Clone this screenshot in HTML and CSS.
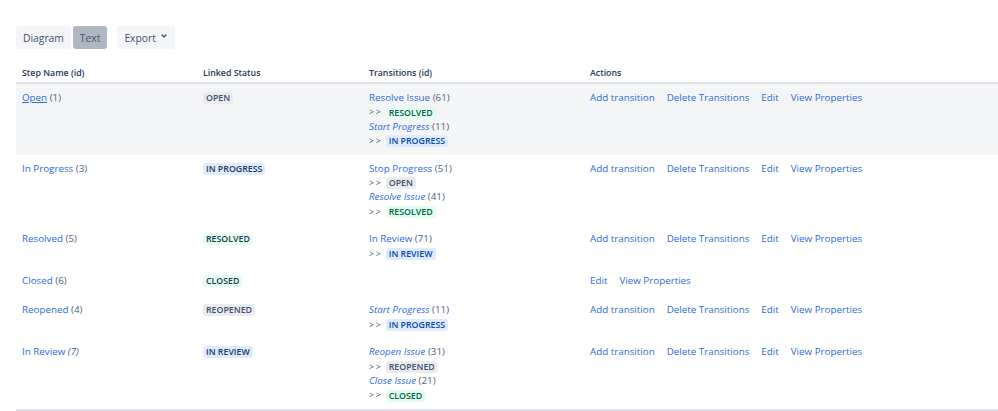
FILE: index.html
```html
<!DOCTYPE html>
<html lang="en">
<head>
  <meta charset="UTF-8">
  <title>Workflow - Text</title>
  <link rel="stylesheet" href="styles.css">
</head>
<body>
  <div class="toolbar">
    <div class="btn-group">
      <button class="btn">Diagram</button>
      <button class="btn active">Text</button>
    </div>
    <button class="btn">Export <svg class="chev" width="8" height="8" viewBox="0 0 8 8"><path d="M1.6 2.6 L4 5 L6.4 2.6" fill="none" stroke="#42526e" stroke-width="1.4"/></svg></button>
  </div>

  <table class="steps">
    <colgroup>
      <col style="width:181px">
      <col style="width:166px">
      <col style="width:221px">
      <col>
    </colgroup>
    <thead>
      <tr>
        <th>Step Name (id)</th>
        <th>Linked Status</th>
        <th>Transitions (id)</th>
        <th>Actions</th>
      </tr>
    </thead>
    <tbody>
      <tr class="hl">
        <td><a class="u">Open</a> (1)</td>
        <td><span class="lozenge grey">OPEN</span></td>
        <td>
          <div><a>Resolve Issue</a> (61)</div>
          <div class="to"><span class="arr">&gt;&gt;</span><span class="lozenge green">RESOLVED</span></div>
          <div><a class="gl">Start Progress</a> (11)</div>
          <div class="to"><span class="arr">&gt;&gt;</span><span class="lozenge blue">IN PROGRESS</span></div>
        </td>
        <td class="actions"><a>Add transition</a><a>Delete Transitions</a><a>Edit</a><a>View Properties</a></td>
      </tr>
      <tr>
        <td><a>In Progress</a> (3)</td>
        <td><span class="lozenge blue dark">IN PROGRESS</span></td>
        <td>
          <div><a>Stop Progress</a> (51)</div>
          <div class="to"><span class="arr">&gt;&gt;</span><span class="lozenge grey">OPEN</span></div>
          <div><a class="gl">Resolve Issue</a> (41)</div>
          <div class="to"><span class="arr">&gt;&gt;</span><span class="lozenge green">RESOLVED</span></div>
        </td>
        <td class="actions"><a>Add transition</a><a>Delete Transitions</a><a>Edit</a><a>View Properties</a></td>
      </tr>
      <tr>
        <td><a>Resolved</a> (5)</td>
        <td><span class="lozenge green dark">RESOLVED</span></td>
        <td>
          <div><a>In Review</a> (71)</div>
          <div class="to"><span class="arr">&gt;&gt;</span><span class="lozenge blue">IN REVIEW</span></div>
        </td>
        <td class="actions"><a>Add transition</a><a>Delete Transitions</a><a>Edit</a><a>View Properties</a></td>
      </tr>
      <tr class="no-trans">
        <td><a>Closed</a> (6)</td>
        <td><span class="lozenge green dark">CLOSED</span></td>
        <td></td>
        <td class="actions"><a>Edit</a><a>View Properties</a></td>
      </tr>
      <tr>
        <td><a>Reopened</a> (4)</td>
        <td><span class="lozenge grey">REOPENED</span></td>
        <td>
          <div><a class="gl">Start Progress</a> (11)</div>
          <div class="to"><span class="arr">&gt;&gt;</span><span class="lozenge blue">IN PROGRESS</span></div>
        </td>
        <td class="actions"><a>Add transition</a><a>Delete Transitions</a><a>Edit</a><a>View Properties</a></td>
      </tr>
      <tr>
        <td><a>In Review</a> <i>(7)</i></td>
        <td><span class="lozenge blue dark">IN REVIEW</span></td>
        <td>
          <div><a class="gl">Reopen Issue</a> (31)</div>
          <div class="to"><span class="arr">&gt;&gt;</span><span class="lozenge grey">REOPENED</span></div>
          <div><a class="gl">Close Issue</a> (21)</div>
          <div class="to"><span class="arr">&gt;&gt;</span><span class="lozenge green">CLOSED</span></div>
        </td>
        <td class="actions"><a>Add transition</a><a>Delete Transitions</a><a>Edit</a><a>View Properties</a></td>
      </tr>
    </tbody>
  </table>
</body>
</html>
```

FILE: styles.css
```css
body {
  font-family: "Open Sans", "Noto Sans", sans-serif;
  font-size: 9.8px;
  margin: 0;
  padding: 26px 0 0 16px;
  color: #42526e;
  background-color: #fff;
}

.toolbar {
  display: flex;
  gap: 10px;
  margin-bottom: 14px;
}

.btn-group {
  display: flex;
  gap: 2px;
}

.btn {
  height: 23px;
  padding: 0 7px;
  margin: 0;
  border: none;
  border-radius: 3px;
  background-color: #f4f5f7;
  color: #42526e;
  font-family: inherit;
  font-size: 10.3px;
  display: flex;
  align-items: center;
  gap: 4px;
}

.btn.active {
  background-color: #b0b7c3;
  color: #42526e;
}

.chev {
  margin-top: -3px;
}

.steps {
  width: 100%;
  border-collapse: collapse;
  table-layout: fixed;
  border-bottom: 2px solid #dfe1e6;
}

.steps th {
  text-align: left;
  font-size: 8.8px;
  font-weight: 600;
  color: #253858;
  padding: 4px 6px 3px;
  border-bottom: 2px solid #dfe1e6;
}

.steps td {
  vertical-align: top;
  padding: 7px 6px 6px;
  line-height: 14.4px;
  color: #505f79;
}

.steps tr.hl td {
  background-color: #f4f5f7;
}

.steps tr.no-trans td {
  padding-bottom: 8px;
}

.steps a {
  color: #2d6ad6;
  text-decoration: none;
  cursor: pointer;
}

.steps a.u {
  text-decoration: underline;
}

.steps a.gl {
  font-style: italic;
}

.to {
  display: flex;
  align-items: center;
  height: 14.4px;
}

.arr {
  letter-spacing: 2px;
  font-size: 8.5px;
  color: #42526e;
  margin-right: 3px;
}

.lozenge {
  display: inline-block;
  font-size: 8.8px;
  font-weight: 600;
  line-height: 12px;
  padding: 0 3px;
  border-radius: 3px;
}

.lozenge.grey {
  background-color: #e9ebee;
  color: #42526e;
}

.lozenge.green {
  background-color: #e3fcef;
  color: #006644;
}

.lozenge.blue {
  background-color: #deebff;
  color: #0747a6;
}

.lozenge.dark {
  color: #253858;
}

.actions {
  white-space: nowrap;
}

.actions a {
  margin-right: 12px;
}
```
